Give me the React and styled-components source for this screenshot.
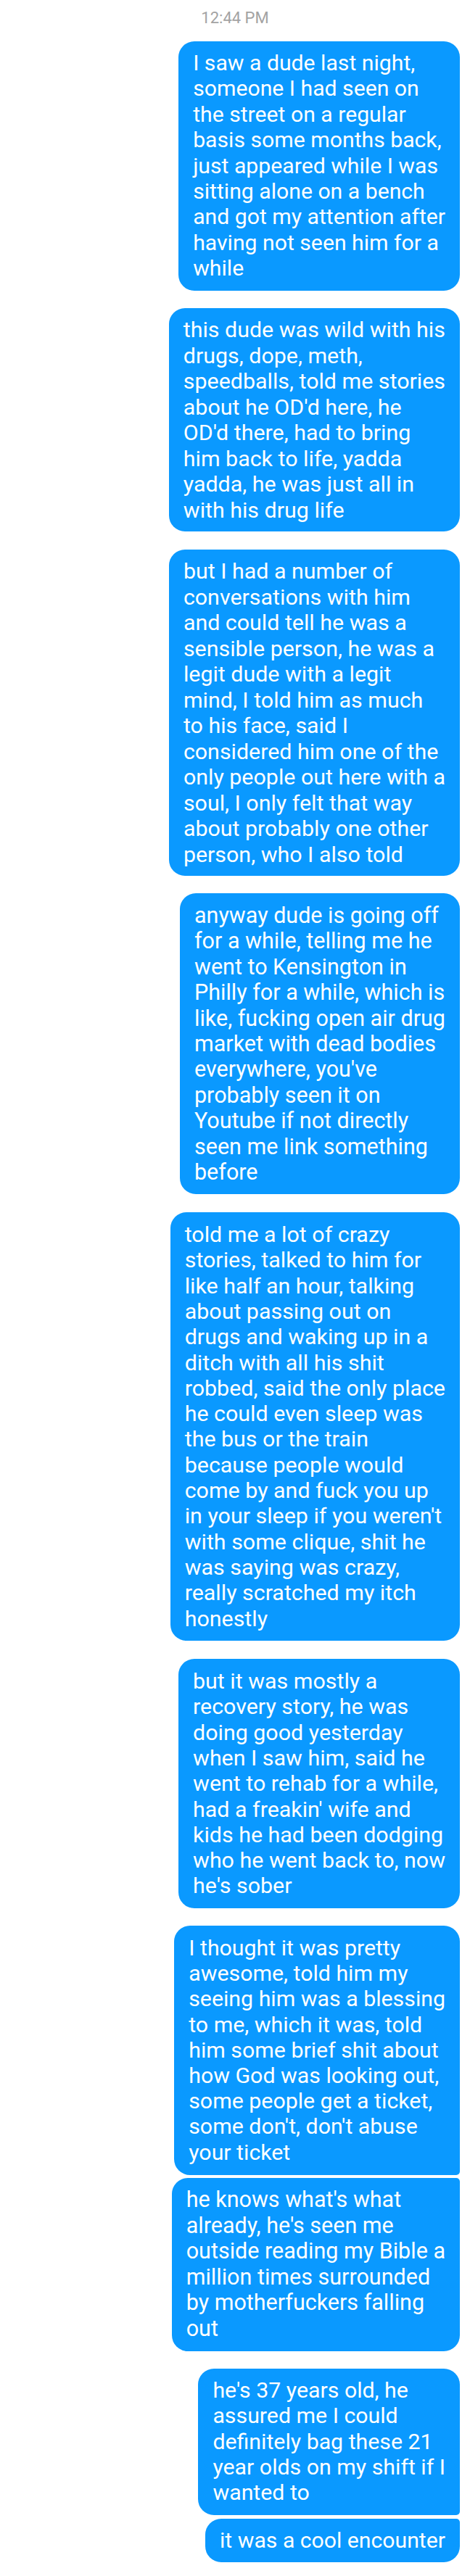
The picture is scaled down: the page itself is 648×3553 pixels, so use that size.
import React from 'react'
import styled, { createGlobalStyle } from 'styled-components'

const GlobalStyle = createGlobalStyle`
  html, body {
    margin: 0;
    padding: 0;
    background: #ffffff;
  }
  body {
    font-family: Roboto, "Noto Sans", "Liberation Sans", sans-serif;
    -webkit-font-smoothing: antialiased;
  }
`

const Thread = styled.div`
  width: 648px;
  min-height: 3553px;
  display: flex;
  flex-direction: column;
  align-items: flex-end;
  padding-right: 14px;
  box-sizing: border-box;
  background: #fff;
`

const Timestamp = styled.div`
  align-self: stretch;
  text-align: center;
  padding: 12px 0 0 14px;
  height: 45px;
  line-height: 26px;
  font-size: 22px;
  color: #a3a3a3;
`

const Bubble = styled.div`
  background: #0a99ff;
  color: #fff;
  font-size: ${p => p.size}px;
  line-height: ${p => p.lh}px;
  padding: ${p => p.pt}px 20px ${p => p.pb}px 20px;
  margin-top: ${p => p.gap}px;
  border-radius: ${p => (p.joinTop ? '22px 5px 22px 22px' : p.joinBottom ? '22px 22px 5px 22px' : '22px')};
  white-space: pre;
  box-sizing: border-box;
`

const messages = [
  {
    gap: 0, size: 30.2, lh: 35.4, pt: 12, pb: 13.4,
    text: `I saw a dude last night,
someone I had seen on
the street on a regular
basis some months back,
just appeared while I was
sitting alone on a bench
and got my attention after
having not seen him for a
while`,
  },
  {
    gap: 24, size: 30.4, lh: 35.5, pt: 12, pb: 12,
    text: `this dude was wild with his
drugs, dope, meth,
speedballs, told me stories
about he OD'd here, he
OD'd there, had to bring
him back to life, yadda
yadda, he was just all in
with his drug life`,
  },
  {
    gap: 25, size: 30.4, lh: 35.5, pt: 12, pb: 12,
    text: `but I had a number of
conversations with him
and could tell he was a
sensible person, he was a
legit dude with a legit
mind, I told him as much
to his face, said I
considered him one of the
only people out here with a
soul, I only felt that way
about probably one other
person, who I also told`,
  },
  {
    gap: 24, size: 30.5, lh: 35.4, pt: 13, pb: 12.6,
    text: `anyway dude is going off
for a while, telling me he
went to Kensington in
Philly for a while, which is
like, fucking open air drug
market with dead bodies
everywhere, you've
probably seen it on
Youtube if not directly
seen me link something
before`,
  },
  {
    gap: 25, size: 30.4, lh: 35.3, pt: 13, pb: 13.2,
    text: `told me a lot of crazy
stories, talked to him for
like half an hour, talking
about passing out on
drugs and waking up in a
ditch with all his shit
robbed, said the only place
he could even sleep was
the bus or the train
because people would
come by and fuck you up
in your sleep if you weren't
with some clique, shit he
was saying was crazy,
really scratched my itch
honestly`,
  },
  {
    gap: 25, size: 30.4, lh: 35.3, pt: 13, pb: 13.3,
    text: `but it was mostly a
recovery story, he was
doing good yesterday
when I saw him, said he
went to rehab for a while,
had a freakin' wife and
kids he had been dodging
who he went back to, now
he's sober`,
  },
  {
    gap: 24, size: 30.3, lh: 35.2, pt: 13, pb: 14.2, joinBottom: true,
    text: `I thought it was pretty
awesome, told him my
seeing him was a blessing
to me, which it was, told
him some brief shit about
how God was looking out,
some people get a ticket,
some don't, don't abuse
your ticket`,
  },
  {
    gap: 4, size: 30.5, lh: 35.6, pt: 12, pb: 13.4, joinTop: true,
    text: `he knows what's what
already, he's seen me
outside reading my Bible a
million times surrounded
by motherfuckers falling
out`,
  },
  {
    gap: 24, size: 30.3, lh: 35.3, pt: 12, pb: 13.5, joinBottom: true,
    text: `he's 37 years old, he
assured me I could
definitely bag these 21
year olds on my shift if I
wanted to`,
  },
  {
    gap: 5, size: 30.2, lh: 35.3, pt: 12, pb: 12.7, joinTop: true,
    text: `it was a cool encounter`,
  },
]

export default function App() {
  return (
    <>
      <GlobalStyle />
      <Thread>
        <Timestamp>12:44 PM</Timestamp>
        {messages.map((m, i) => (
          <Bubble
            key={i}
            gap={m.gap}
            size={m.size}
            lh={m.lh}
            pt={m.pt}
            pb={m.pb}
            joinTop={m.joinTop}
            joinBottom={m.joinBottom}
          >
            {m.text}
          </Bubble>
        ))}
      </Thread>
    </>
  )
}
